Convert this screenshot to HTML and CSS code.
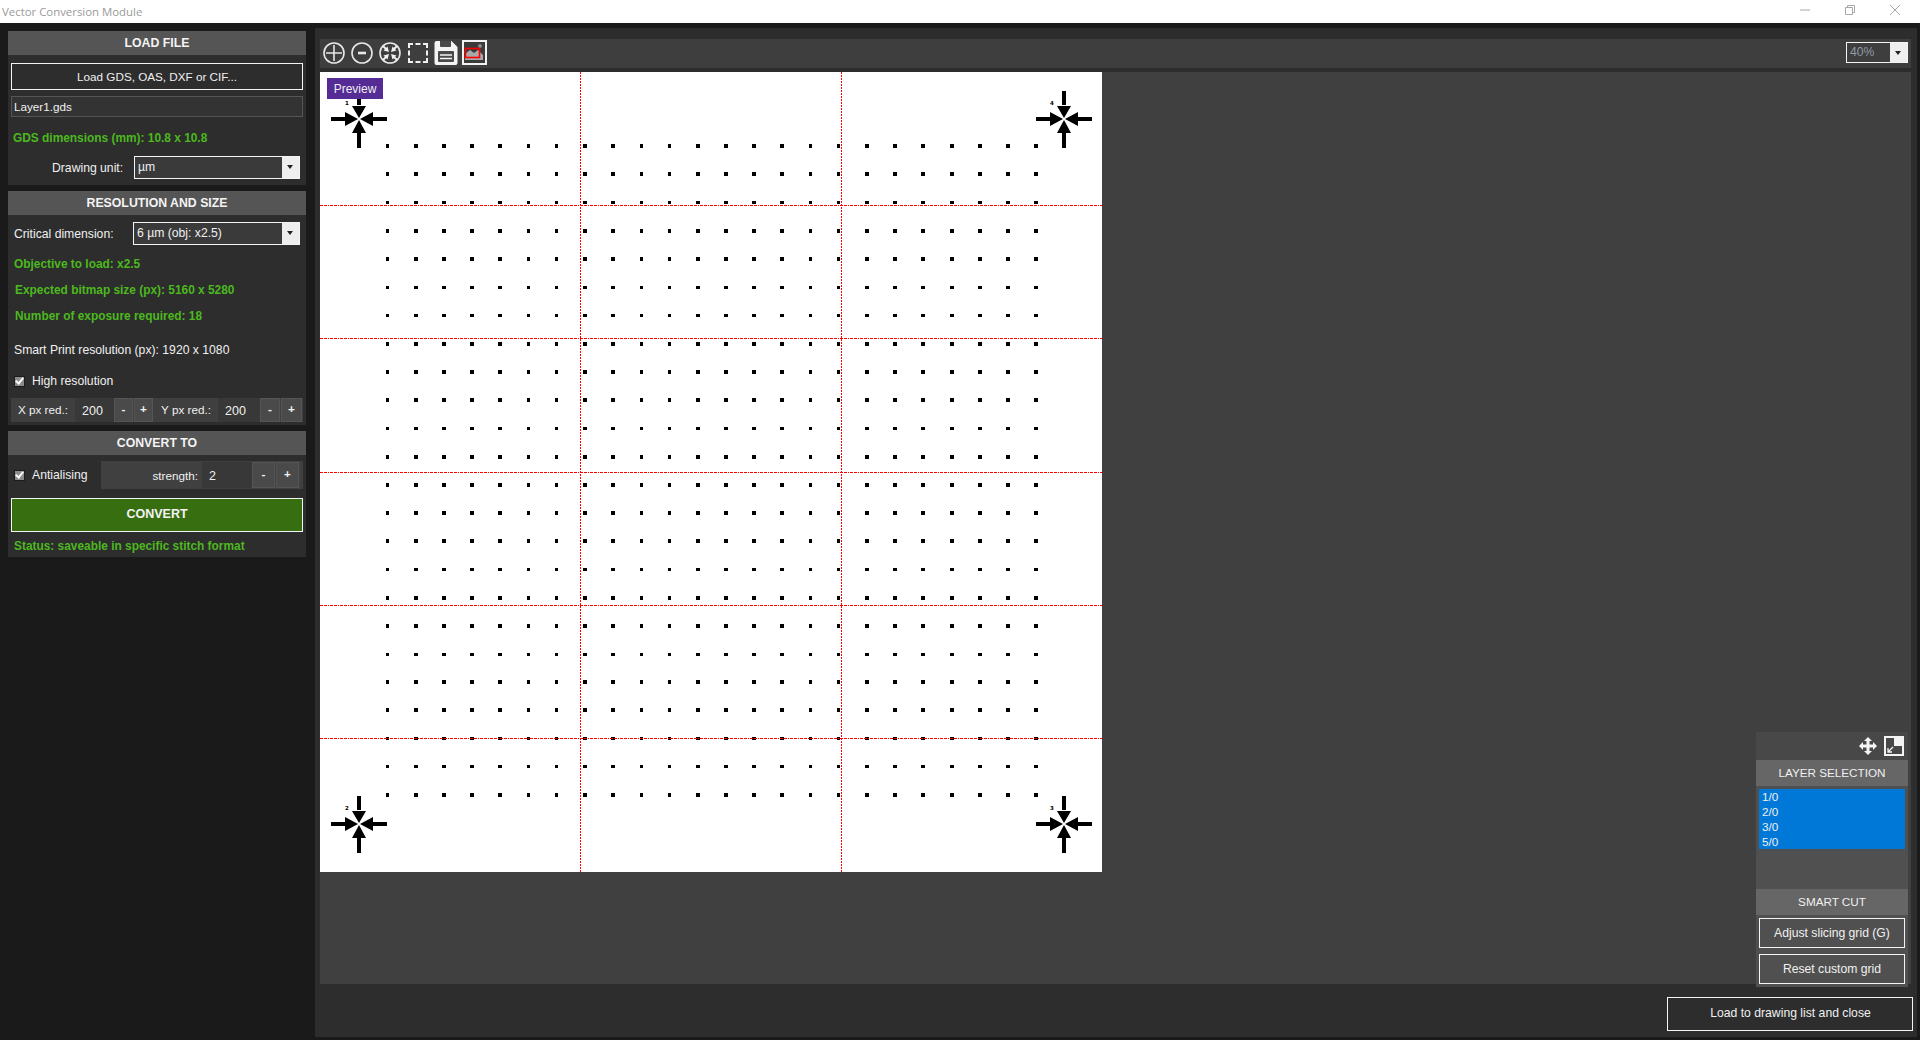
FILE: index.html

```html
<!DOCTYPE html>
<html lang="en">
<head>
    <meta charset="UTF-8">
    <title>Vector Conversion Module</title>
    <link rel="stylesheet" href="styles.css">
</head>
<body>
    <div class="titlebar">
        <span class="title">Vector Conversion Module</span>
        <div class="winbtns">
            <svg width="10" height="10" viewBox="0 0 10 10"><path d="M0 5h10" stroke="#a8a8a8" fill="none"/></svg>
            <svg width="10" height="10" viewBox="0 0 10 10"><path d="M2.5 2.5v-2h7v7h-2M.5 2.5h7v7h-7z" stroke="#a8a8a8" fill="none"/></svg>
            <svg width="10" height="10" viewBox="0 0 10 10"><path d="M0 0l10 10M10 0l-10 10" stroke="#a8a8a8" fill="none"/></svg>
        </div>
    </div>

    <div class="app">
        <!-- left column -->
        <div class="side">
            <div class="section sec-load">
                <div class="sec-head">LOAD FILE</div>
                <div class="btn btn-load">Load GDS, OAS, DXF or CIF...</div>
                <div class="filebox">Layer1.gds</div>
                <div class="green gds-dim">GDS dimensions (mm): 10.8 x 10.8</div>
                <div class="unit-row">
                    <span class="label">Drawing unit:</span>
                    <div class="combo combo-unit"><span class="combo-val">µm</span><span class="combo-arrow"></span></div>
                </div>
            </div>

            <div class="section sec-res">
                <div class="sec-head">RESOLUTION AND SIZE</div>
                <div class="cd-row">
                    <span class="label">Critical dimension:</span>
                    <div class="combo combo-cd"><span class="combo-val">6 µm (obj: x2.5)</span><span class="combo-arrow"></span></div>
                </div>
                <div class="green info-obj">Objective to load: x2.5</div>
                <div class="green info-size">Expected bitmap size (px): 5160 x 5280</div>
                <div class="green info-exp">Number of exposure required: 18</div>
                <div class="info-smart">Smart Print resolution (px): 1920 x 1080</div>
                <div class="check-row check-hires"><span class="check"></span>High resolution</div>
                <div class="red-row">
                    <span class="red-label red-x">X px red.:</span>
                    <span class="red-val red-val-x">200</span>
                    <span class="step step-a">-</span>
                    <span class="step step-a">+</span>
                    <span class="red-label red-y">Y px red.:</span>
                    <span class="red-val red-val-y">200</span>
                    <span class="step step-b">-</span>
                    <span class="step step-c">+</span>
                </div>
            </div>

            <div class="section sec-conv">
                <div class="sec-head">CONVERT TO</div>
                <div class="aa-row">
                    <div class="check-row check-aa"><span class="check"></span>Antialising</div>
                    <div class="strength">
                        <span class="str-label">strength:</span>
                        <span class="str-val">2</span>
                        <span class="step step-s">-</span>
                        <span class="step step-s">+</span>
                    </div>
                </div>
                <div class="btn btn-convert">CONVERT</div>
                <div class="green status">Status: saveable in specific stitch format</div>
            </div>
        </div>

        <!-- main area -->
        <div class="main">
            <div class="toolbar">
                <svg class="tool" width="24" height="24" viewBox="0 0 24 24"><circle cx="12" cy="12" r="10" fill="none" stroke="#e8e8e8" stroke-width="1.6"/><path d="M12 4v16M4 12h16" stroke="#e8e8e8" stroke-width="1.6"/></svg>
                <svg class="tool" width="24" height="24" viewBox="0 0 24 24"><circle cx="12" cy="12" r="10" fill="none" stroke="#e8e8e8" stroke-width="1.6"/><path d="M8 12h8" stroke="#e8e8e8" stroke-width="2.6"/></svg>
                <svg class="tool" width="24" height="24" viewBox="0 0 24 24"><circle cx="12" cy="12" r="10" fill="none" stroke="#e8e8e8" stroke-width="1.6"/><path d="M11 11L5.500 9.500 9.500 5.500zM13 11L18.500 9.500 14.500 5.500zM11 13L5.500 14.500 9.500 18.500zM13 13L18.500 14.500 14.500 18.500z" fill="#f0f0f0"/><path d="M5 5l4 4M19 5l-4 4M5 19l4-4M19 19l-4-4" stroke="#f0f0f0" stroke-width="1.800"/></svg>
                <svg class="tool" width="24" height="24" viewBox="0 0 24 24"><path d="M3 7V3h4M9.500 3h5M17 3h4v4M21 9.500v5M21 17v4h-4M14.500 21h-5M7 21H3v-4M3 14.500v-5" fill="none" stroke="#f0f0f0" stroke-width="2"/></svg>
                <svg class="tool" width="24" height="24" viewBox="0 0 24 24"><path d="M2.500 0h15l6 6v16a2 2 0 0 1-2 2h-19a2 2 0 0 1-2-2v-20a2 2 0 0 1 2-2z" fill="#f4f4f4"/><path d="M6 0h11v5a1 1 0 0 1-1 1h-9a1 1 0 0 1-1-1z" fill="#4a4a4a"/><rect x="4" y="10" width="16" height="11" rx="1" fill="#4a4a4a"/><path d="M6 14h12M6 17.500h12" stroke="#f4f4f4" stroke-width="1.500"/></svg>
                <svg class="tool tool-img" width="25" height="25" viewBox="0 0 25 25"><rect width="25" height="25" fill="#f2f2f2"/><rect x="2" y="2" width="21" height="21" fill="#3b3b3b"/><path d="M3 20v-6l5-4 4 3 4-3 5 5v5z" fill="#a8a8a8"/><circle cx="18" cy="6" r="2" fill="#8a8a8a"/><rect x="3.500" y="8.500" width="14" height="9" fill="none" stroke="#f00" stroke-width="1.600"/></svg>
                <div class="combo combo-zoom"><span class="combo-val">40%</span><span class="combo-arrow"></span></div>
            </div>

            <div class="canvas">
                <div class="preview-tag">Preview</div>
                <svg class="drawing" width="782" height="800" viewBox="320 72 782 800" shape-rendering="crispEdges">
                    <defs>
                        <path id="row4" d="M386 0h3v4h-3zM414 0h4v4h-4zM442 0h4v4h-4zM470 0h4v4h-4zM498 0h4v4h-4zM527 0h3v4h-3zM555 0h3v4h-3zM583 0h4v4h-4zM611 0h4v4h-4zM640 0h3v4h-3zM668 0h3v4h-3zM696 0h4v4h-4zM724 0h4v4h-4zM752 0h4v4h-4zM780 0h4v4h-4zM809 0h3v4h-3zM837 0h3v4h-3zM865 0h4v4h-4zM893 0h4v4h-4zM921 0h4v4h-4zM950 0h4v4h-4zM978 0h4v4h-4zM1006 0h4v4h-4zM1034 0h4v4h-4z"/>
                        <path id="row3" d="M386 0h3v3h-3zM414 0h4v3h-4zM442 0h4v3h-4zM470 0h4v3h-4zM498 0h4v3h-4zM527 0h3v3h-3zM555 0h3v3h-3zM583 0h4v3h-4zM611 0h4v3h-4zM640 0h3v3h-3zM668 0h3v3h-3zM696 0h4v3h-4zM724 0h4v3h-4zM752 0h4v3h-4zM780 0h4v3h-4zM809 0h3v3h-3zM837 0h3v3h-3zM865 0h4v3h-4zM893 0h4v3h-4zM921 0h4v3h-4zM950 0h4v3h-4zM978 0h4v3h-4zM1006 0h4v3h-4zM1034 0h4v3h-4z"/>
                        <g id="fid">
                            <path d="M-2-28h4v14h-4zM-2 14h4v15h-4zM-28-2h14v4h-14zM14-2h14v4h-14z"/>
                            <path shape-rendering="auto" d="M0-1l-7-12h14zM0 1l-7 13h14zM-1 0l-13-7v14zM1 0l13-7v14z"/>
                        </g>
                    </defs>
                    <rect x="320" y="72" width="782" height="800" fill="#fff"/>
                    <use href="#row4" y="144"/><use href="#row4" y="172"/><use href="#row3" y="201"/><use href="#row4" y="229"/>
                    <use href="#row4" y="257"/><use href="#row3" y="286"/><use href="#row3" y="314"/><use href="#row4" y="342"/>
                    <use href="#row4" y="370"/><use href="#row4" y="398"/><use href="#row3" y="427"/><use href="#row4" y="455"/>
                    <use href="#row4" y="483"/><use href="#row4" y="511"/><use href="#row4" y="539"/><use href="#row3" y="568"/>
                    <use href="#row4" y="596"/><use href="#row4" y="624"/><use href="#row3" y="653"/><use href="#row4" y="680"/>
                    <use href="#row4" y="708"/><use href="#row3" y="737"/><use href="#row3" y="765"/><use href="#row4" y="793"/>
                    <use href="#fid" x="359" y="119"/><use href="#fid" x="1064" y="119"/>
                    <use href="#fid" x="359" y="824"/><use href="#fid" x="1064" y="824"/>
                    <g class="fid-num">
                        <text x="345" y="105">1</text><text x="1050" y="105">4</text>
                        <text x="345" y="810">2</text><text x="1050" y="810">3</text>
                    </g>
                    <path class="cut-h" d="M320 205.500H1102M320 338.500H1102M320 472.500H1102M320 605.500H1102M320 738.500H1102"/>
                    <path class="cut-v" d="M580.500 72V872M841.500 72V872"/>
                </svg>

                <!-- floating layer panel -->
                <div class="layer-panel">
                    <div class="lp-top">
                        <svg width="18" height="18" viewBox="0 0 18 18"><path d="M9 0l4 4h-2.500v3.500H14V5l4 4-4 4v-2.500h-3.500V14H13l-4 4-4-4h2.500v-3.500H4V13L0 9l4-4v2.500h3.500V4H5z" fill="#f4f4f4"/></svg>
                        <svg width="20" height="20" viewBox="0 0 20 20"><rect x="1" y="1" width="18" height="18" fill="#484848" stroke="#f4f4f4" stroke-width="2"/><rect x="10" y="1" width="9" height="9" fill="#f4f4f4"/><path d="M9 11l-4.500 4.500M4 12v4h4" fill="none" stroke="#f4f4f4" stroke-width="1.300"/></svg>
                    </div>
                    <div class="lp-head">LAYER SELECTION</div>
                    <div class="lp-list">
                        <div class="lp-sel">
                            <div>1/0</div>
                            <div>2/0</div>
                            <div>3/0</div>
                            <div>5/0</div>
                        </div>
                    </div>
                    <div class="lp-head">SMART CUT</div>
                    <div class="lp-btns">
                        <div class="btn lp-btn">Adjust slicing grid (G)</div>
                        <div class="btn lp-btn">Reset custom grid</div>
                    </div>
                </div>
            </div>

            <div class="footer">
                <div class="btn btn-close">Load to drawing list and close</div>
            </div>
        </div>
    </div>
</body>
</html>
```

FILE: styles.css

```css
/* page */
html, body {
    margin: 0;
    padding: 0;
    height: 100%;
    overflow: hidden;
}

body {
    background-color: #1a1a1a;
    color: #f0f0f0;
    font-family: "Liberation Sans", Arial, sans-serif;
    font-size: 12.2px;
}

.titlebar {
    height: 23px;
    background-color: #fff;
    display: flex;
    align-items: center;
    justify-content: space-between;
}

.title {
    margin-left: 2px;
    color: #9a9a9a;
    font-family: "Open Sans", sans-serif;
    font-size: 11.4px;
}

.winbtns {
    display: flex;
    gap: 35px;
    margin-right: 20px;
    margin-top: -4px;
}

.app {
    display: flex;
    height: 1017px;
}

/* left column */
.side {
    width: 298px;
    margin-left: 8px;
    margin-right: 9px;
    padding-top: 8px;
    flex-shrink: 0;
}

.section {
    background-color: #2d2d2d;
    margin-bottom: 6px;
}

.sec-load { height: 154px; }
.sec-res { height: 234px; }
.sec-conv { height: 126px; }

.sec-head {
    height: 24px;
    line-height: 24px;
    background-color: #555;
    text-align: center;
    font-weight: bold;
    font-size: 12.3px;
    color: #f4f4f4;
}

.btn {
    box-sizing: border-box;
    border: 1px solid #f4f4f4;
    display: flex;
    align-items: center;
    justify-content: center;
    color: #f0f0f0;
}

.btn-load {
    height: 27px;
    margin: 8px 3px 0;
    padding-bottom: 1px;
    font-size: 11.7px;
}

.filebox {
    box-sizing: border-box;
    height: 21px;
    margin: 6px 3px 0;
    padding-left: 2px;
    line-height: 19px;
    border: 1px solid #555;
    background-color: #333;
    font-size: 11.7px;
}

.green {
    color: #4cb81e;
    font-weight: bold;
    font-size: 11.9px;
    padding-left: 6px;
    height: 14px;
    line-height: 14px;
}

.gds-dim {
    margin-top: 14px;
    padding-left: 5px;
}

.unit-row {
    display: flex;
    align-items: center;
    margin-top: 11px;
}

.unit-row .label {
    margin-left: 44px;
    width: 82px;
    padding-top: 1px;
}

.combo {
    box-sizing: border-box;
    border: 1px solid #f4f4f4;
    display: flex;
    background-color: #3a3a3a;
}

.combo-val {
    flex: 1;
    padding-left: 3px;
    line-height: 21px;
}

.combo-arrow {
    width: 17px;
    background-color: #eee;
    position: relative;
}

.combo-arrow::after {
    content: "";
    position: absolute;
    left: 5px;
    top: 8px;
    border-left: 3px solid transparent;
    border-right: 3px solid transparent;
    border-top: 4px solid #222;
}

.combo-unit {
    width: 166px;
    height: 23px;
}

.cd-row {
    display: flex;
    align-items: center;
    margin-top: 7px;
}

.cd-row .label {
    margin-left: 6px;
    width: 119px;
}

.combo-cd {
    width: 167px;
    height: 23px;
}

.info-obj { margin-top: 12px; padding-left: 6px; }
.info-size { margin-top: 12px; padding-left: 7px; }
.info-exp { margin-top: 12px; padding-left: 7px; }

.info-smart {
    margin-top: 20px;
    padding-left: 6px;
    height: 14px;
    line-height: 14px;
}

.check-row {
    display: flex;
    align-items: center;
}

.check-hires {
    margin-top: 17px;
    padding-left: 6px;
    height: 14px;
}

.check {
    box-sizing: border-box;
    width: 11px;
    height: 11px;
    margin-right: 7px;
    background-color: #8c8c8c;
    border: 1px solid #1c1c1c;
    position: relative;
    flex-shrink: 0;
}

/* check mark */
.check::after {
    content: "";
    position: absolute;
    left: 2px;
    top: -1px;
    width: 3px;
    height: 6px;
    border-right: 2px solid #fafafa;
    border-bottom: 2px solid #fafafa;
    transform: rotate(40deg);
}

.red-row {
    display: flex;
    height: 24px;
    margin: 10px 3px 0;
    background-color: #3f3f3f;
    line-height: 24px;
    font-size: 11.7px;
}

.red-label { text-align: center; }
.red-x { width: 64px; }
.red-y { width: 64px; }

.red-val {
    background-color: #383838;
    font-size: 12.5px;
    padding-left: 7px;
    padding-top: 1px;
    box-sizing: border-box;
}

.red-val-x { width: 39px; }
.red-val-y { width: 42px; }

.step {
    box-sizing: border-box;
    background-color: #4a4a4a;
    border: 1px solid #555;
    line-height: 20px;
    text-align: center;
    margin-right: 1px;
    font-weight: bold;
}

.step-a { width: 19px; }
.step-b { width: 20px; }
.step-c { width: 21px; margin-right: 0; }

.aa-row {
    display: flex;
    height: 28px;
    margin-top: 6px;
}

.check-aa {
    width: 93px;
    padding-left: 6px;
    box-sizing: border-box;
}

.strength {
    display: flex;
    align-items: stretch;
    width: 202px;
    background-color: #404040;
    padding: 1px 3px 1px 0;
    box-sizing: border-box;
    line-height: 26px;
    font-size: 11.7px;
}

.str-label {
    width: 101px;
    text-align: right;
    padding-right: 4px;
    padding-top: 1px;
    box-sizing: border-box;
}

.str-val {
    width: 50px;
    background-color: #383838;
    padding-left: 7px;
    padding-top: 1px;
    box-sizing: border-box;
    font-size: 12.5px;
}

.step-s { width: 23px; line-height: 22px; }

.btn-convert {
    height: 34px;
    margin: 9px 3px 0;
    padding-bottom: 2px;
    background-color: #376e10;
    font-weight: bold;
    font-size: 12.5px;
    color: #f4f4f4;
}

.status {
    margin-top: 7px;
}

/* main area */
.main {
    margin-top: 5px;
    margin-right: 3px;
    width: 1602px;
    height: 1009px;
    box-sizing: border-box;
    padding: 11px 6px 0 5px;
    background-color: #2d2d2d;
    display: flex;
    flex-direction: column;
}

.toolbar {
    height: 29px;
    box-sizing: border-box;
    background-color: #3e3e3e;
    display: flex;
    align-items: center;
    padding-left: 2px;
    padding-bottom: 2px;
    gap: 4px;
    margin-bottom: 4px;
}

.tool { flex-shrink: 0; }

.combo-zoom {
    width: 62px;
    height: 21px;
    margin-left: auto;
    margin-right: 3px;
    background-color: #3e3e3e;
}

.combo-zoom .combo-val {
    color: #8f9aa5;
    line-height: 19px;
}

.canvas {
    height: 912px;
    background-color: #404040;
    position: relative;
}

.drawing {
    display: block;
}

.cut-h, .cut-v {
    fill: none;
    stroke: #f00;
    stroke-width: 1;
}

.cut-h { stroke-dasharray: 3 1 3 1 1 1; }
.cut-v { stroke-dasharray: 2 1; }

.fid-num text {
    font-size: 5.5px;
    font-weight: bold;
    font-family: "DejaVu Sans", sans-serif;
}

.preview-tag {
    position: absolute;
    left: 7px;
    top: 6px;
    width: 56px;
    height: 21px;
    line-height: 23px;
    background-color: #552b96;
    text-align: center;
    color: #eee;
    font-size: 12px;
}

/* layer panel sits over the canvas */
.layer-panel {
    position: absolute;
    right: 3px;
    bottom: -3px;
    width: 152px;
    height: 255px;
    background-color: #505050;
    font-size: 11.7px;
}

.lp-top {
    height: 28px;
    background-color: #484848;
    display: flex;
    align-items: center;
    justify-content: flex-end;
    gap: 7px;
    padding-right: 4px;
    box-sizing: border-box;
}

.lp-head {
    height: 26px;
    line-height: 26px;
    background-color: #666;
    text-align: center;
}

.lp-list {
    height: 103px;
    box-sizing: border-box;
    padding: 3px 3px 0;
}

.lp-sel {
    height: 60px;
    background-color: #0078d7;
    padding-left: 3px;
    line-height: 15px;
}

.lp-btns {
    display: flex;
    flex-direction: column;
    gap: 6px;
    padding: 3px 3px 0;
}

.lp-btn {
    height: 30px;
    padding-bottom: 1px;
    font-size: 12.2px;
}

.footer {
    display: flex;
    justify-content: flex-end;
    padding-top: 13px;
    margin-right: -2px;
}

.btn-close {
    width: 246px;
    height: 34px;
    padding-bottom: 2px;
    padding-left: 1px;
}
```
